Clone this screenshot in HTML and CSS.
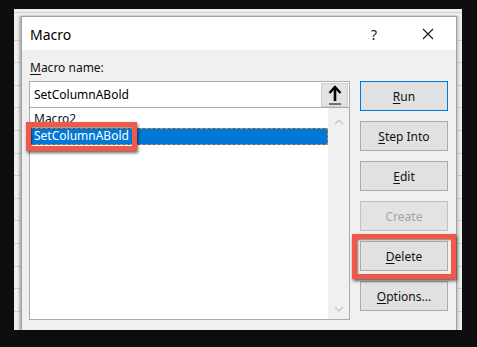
FILE: index.html
```html
<!DOCTYPE html>
<html>
<head>
<meta charset="utf-8">
<link rel="stylesheet" href="styles.css">
</head>
<body>
<div class="screen">
  <div class="sheet">
    <div class="dialog">
      <div class="titlebar">
        <span class="title">Macro</span>
        <span class="help">?</span>
        <span class="close"><svg width="12" height="12" viewBox="0 0 12 12"><path d="M1 1 L11 11 M11 1 L1 11" stroke="#1a1a1a" stroke-width="1.1" fill="none"/></svg></span>
      </div>
      <div class="content">
        <div class="leftcol">
          <div class="lbl"><u>M</u>acro name:</div>
          <div class="namebox">
            <span class="nametext">SetColumnABold</span>
            <span class="upbtn"><svg width="14" height="20" viewBox="0 0 14 20"><path d="M7 2 L7 16" stroke="#000" stroke-width="2.6" fill="none"/><path d="M1.5 8 L7 2 L12.5 8" stroke="#000" stroke-width="2.4" fill="none" stroke-linejoin="miter"/><path d="M1 19 L13 19" stroke="#000" stroke-width="1"/></svg></span>
          </div>
          <div class="list">
            <div class="items">
              <div class="item">Macro2</div>
              <div class="item sel">SetColumnABold</div>
              <div class="hl hl-item"></div>
            </div>
            <div class="scroll">
              <svg width="10" height="6" viewBox="0 0 10 6"><path d="M1 5 L5 1 L9 5" stroke="#c4c4c4" stroke-width="1.2" fill="none"/></svg>
              <svg width="10" height="6" viewBox="0 0 10 6"><path d="M1 1 L5 5 L9 1" stroke="#c4c4c4" stroke-width="1.2" fill="none"/></svg>
            </div>
          </div>
        </div>
        <div class="buttons">
          <div class="btn default"><u>R</u>un</div>
          <div class="btn"><u>S</u>tep Into</div>
          <div class="btn"><u>E</u>dit</div>
          <div class="btn disabled">Create</div>
          <div class="btn wrap"><u>D</u>elete<span class="hl hl-btn"></span></div>
          <div class="btn"><u>O</u>ptions...</div>
        </div>
      </div>
    </div>
  </div>
</div>
</body>
</html>
```

FILE: styles.css
```css
html, body {
  margin: 0;
  padding: 0;
  background: #0d0d0d;
}
body {
  width: 477px;
  height: 347px;
  overflow: hidden;
  font-family: "Noto Sans", "Open Sans", sans-serif;
  font-size: 12px;
  color: #000;
}
.screen {
  padding: 9px 0 0 14px;
}
.sheet {
  width: 448px;
  height: 321px;
  box-sizing: border-box;
  padding: 7px 5px 0 7px;
  background-color: #efefef;
  background-image:
    repeating-linear-gradient(to bottom, transparent 0, transparent 21.6px, #d2d2d2 21.6px, #d2d2d2 22.6px);
  background-position: 0 9px;
}
.dialog {
  width: 436px;
  height: 314px;
  box-sizing: border-box;
  border: 1px solid #a0a0a0;
  border-bottom: none;
  background: #f0f0f0;
  box-shadow: -2px 0 2px rgba(0,0,0,0.25), 2px 0 2px rgba(0,0,0,0.15);
}
.titlebar {
  height: 33px;
  background: #fff;
  display: flex;
  align-items: center;
}
.title {
  font-size: 14px;
  padding-left: 8px;
  margin-top: 1px;
}
.help {
  margin-left: auto;
  font-size: 14px;
  color: #222;
  margin-right: 45px;
  margin-top: 1px;
}
.close {
  display: flex;
  margin-right: 22px;
  margin-top: 1px;
}
.content {
  display: flex;
  gap: 10px;
  padding: 10px 8px 0 7px;
}
.leftcol {
  width: 321px;
  display: flex;
  flex-direction: column;
}
.lbl {
  height: 16px;
  line-height: 16px;
  margin-bottom: 5px;
  padding-left: 1px;
  color: #111;
}
.lbl u, .btn u {
  text-decoration-thickness: 1px;
  text-underline-offset: 2px;
}
.namebox {
  height: 26px;
  box-sizing: border-box;
  border: 1px solid #ababab;
  border-bottom: none;
  background: #fff;
  display: flex;
  align-items: center;
}
.nametext {
  padding-left: 4px;
  flex: 1;
}
.upbtn {
  width: 27px;
  height: 24px;
  margin: 0 1px 0 0;
  background: #e3e3e3;
  box-sizing: border-box;
  border: 1px solid #d0d0d0;
  display: flex;
  align-items: center;
  justify-content: center;
}
.list {
  height: 213px;
  box-sizing: border-box;
  border: 1px solid #ababab;
  background: #fff;
  display: flex;
}
.items {
  flex: 1;
  position: relative;
  padding-top: 3px;
}
.item {
  height: 17px;
  line-height: 16px;
  padding-left: 4px;
  box-sizing: border-box;
  color: #111;
}
.item.sel {
  background: #0078d7;
  color: #fff;
  border: 1px dashed #e0882e;
  padding-left: 3px;
  line-height: 14px;
}
.scroll {
  width: 21px;
  background: #f0f0f0;
  display: flex;
  flex-direction: column;
  align-items: center;
  justify-content: space-between;
  padding: 11px 0 7px;
  box-sizing: border-box;
}
.buttons {
  width: 88px;
  margin-top: 21px;
  display: flex;
  flex-direction: column;
  gap: 10px;
}
.btn {
  height: 30px;
  box-sizing: border-box;
  border: 1px solid #adadad;
  background: #e1e1e1;
  display: flex;
  align-items: center;
  justify-content: center;
  color: #111;
}
.btn.default {
  border: 1px solid #0078d7;
}
.btn.disabled {
  color: #a3a3a3;
  border-color: #bfbfbf;
  background: #e3e3e3;
}
.wrap {
  position: relative;
}
.hl {
  position: absolute;
  box-sizing: border-box;
  border: 5px solid #f2584a;
  box-shadow: 1px 2px 3px rgba(0,0,0,0.6), inset 1px 1px 2px rgba(0,0,0,0.5);
}
.hl-item {
  left: -4px;
  top: 14px;
  width: 111px;
  height: 29px;
}
.hl-btn {
  left: -9px;
  top: -8px;
  width: 104px;
  height: 45px;
}
```
